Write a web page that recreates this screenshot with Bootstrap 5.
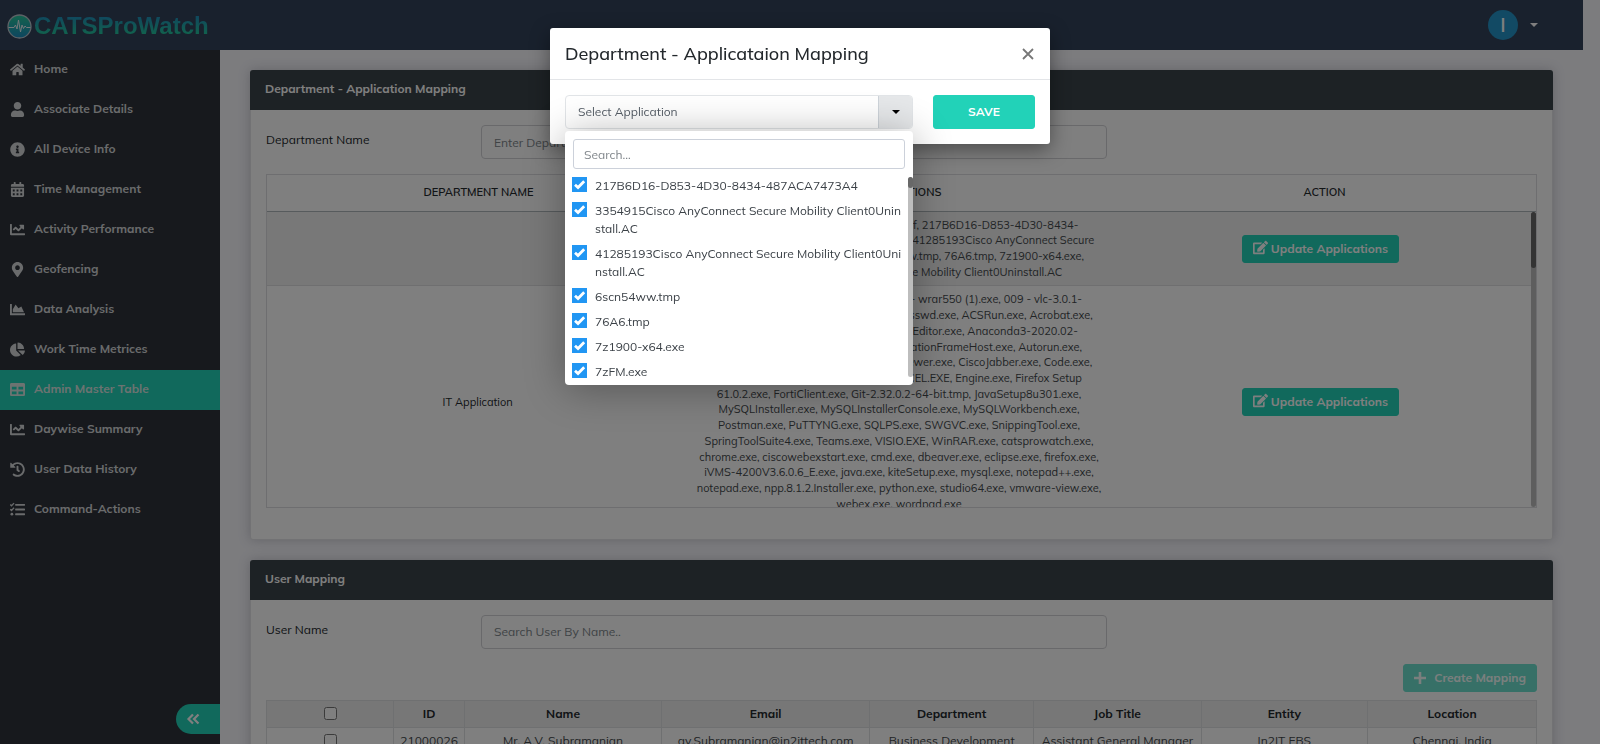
<!DOCTYPE html>
<html lang="en">
<head>
<meta charset="utf-8">
<meta name="viewport" content="width=device-width, initial-scale=1">
<title>CATSProWatch - Admin Master Table</title>
<link href="https://cdn.jsdelivr.net/npm/bootstrap@5.3.0/dist/css/bootstrap.min.css" rel="stylesheet">
<style>
  :root { --brand: #22d2b8; --bar: #32425a; --side: #2e333b; --head: #3b444a; }
  body { font-family: Mulish, Muli, Lato, sans-serif; font-size: 12px; line-height: 18px; color: #23282c; background: #f8f8fd; padding-right: 17px; overflow: hidden; }
  .fa-ico { width: 15px; height: 15px; fill: currentColor; flex: none; vertical-align: -2px; }
  .topbar { height: 50px; background: var(--bar); padding: 0 45px 0 7px; }
  .brand-name { font: bold 25px/30px "Liberation Sans", sans-serif; font-size: 24px; background: linear-gradient(#2092bb 20%, #24c59a 80%); -webkit-background-clip: text; background-clip: text; color: transparent; }
  .brand-link { gap: 2px; padding-top: 2px; }
  .avatar { width: 30px; height: 30px; background: #2494c8; font-size: 20px; font-weight: 600; }
  .user-toggle::after { margin-left: 12px; }
  .side { width: 220px; flex: none; height: calc(100vh - 50px); background: var(--side); }
  .side .nav-link { height: 40px; color: #d4d6d8; font-weight: 700; padding: 0 10px 2px; gap: 9px; }
  .side .nav-link.active { background: var(--brand); color: #d8e6e2; }
  .fold { width: 44px; height: 30px; background: var(--brand); color: #fff; border-radius: 15px 0 0 15px; margin-bottom: 10px; }
  .main-area { padding: 20px 30px; gap: 20px; min-width: 0; }
  .panel { border-color: #e4e5e8; border-radius: 3px; box-shadow: 0 0 12px rgba(60,60,75,.25); }
  .panel > .card-header { height: 40px; margin: -1px -1px 0; background: var(--head); color: #fff; font-weight: 700; border: 0; border-radius: 3px 3px 0 0; padding: 0 15px 2px; }
  .panel > .card-body { padding: 15px 15px 31px; }
  .field-row { display: grid; grid-template-columns: 215px minmax(0, 626fr) minmax(0, 430fr); }
  .field-row label { padding-top: 6px; }
  .form-control { font-size: 12px; line-height: 18px; height: 34px; border-radius: 4px; border-color: #d2d2d6; padding: 6px 12px; }
  .form-control::placeholder { color: #80868b; }
  .btn-brand { --bs-btn-color: #fff; --bs-btn-bg: var(--brand); --bs-btn-border-color: var(--brand); --bs-btn-hover-color: #fff; --bs-btn-hover-bg: #1dbda5; --bs-btn-disabled-bg: #6fe0ce; --bs-btn-disabled-color: #f6fffd; --bs-btn-disabled-border-color: #6fe0ce; --bs-btn-disabled-opacity: 1; font-size: 12px; line-height: 18px; font-weight: 700; border-radius: 3px; padding: 4px 10px; }
  .dept { border: 1px solid #dcdde0; margin-top: 15px; }
  .dept table { table-layout: fixed; text-align: center; margin: 0; width: 100%; }
  .dept th { height: 36px; font-size: 11px; font-weight: 600; border-bottom: 1px solid #aeb6ba; padding: 0 4px 1px; }
  .dept-scroll { height: 295px; overflow: hidden; }
  .dept-scroll td { padding: 6px 4px 5px; border-bottom: 1px solid #dedfe1; vertical-align: middle; font-size: 11px; }
  .dept-scroll td.apps { font-size: 11px; line-height: 1.43; white-space: nowrap; color: #43484c; }
  .dept-scroll tr:first-child td { background: #f0f0f0; }
  .bar-track { width: 5px; flex: none; border-radius: 3px; background: #bdbdbd; }
  .bar-thumb { width: 5px; border-radius: 3px; background: #686868; }
  .map-actions { margin-top: 15px; }
  .users { table-layout: fixed; text-align: center; margin: 8px 0 0; --bs-table-border-color: #dfe0e2; --bs-table-color: #23282c; }
  .users th { background: #efefef; font-weight: 700; }
  .users th, .users td { padding: 4px; height: 27px; white-space: nowrap; vertical-align: middle; }
  .users td { color: #43484c; }
  .users input { width: 13px; height: 13px; margin: 0; display: block; margin-inline: auto; }
  .modal-content { border: 0; border-radius: 3px; box-shadow: 0 6px 20px rgba(0,0,0,.4); }
  .modal-header { height: 52px; padding: 0 15px; border-color: #e3e5e8; }
  .modal-title { font-size: 18px; line-height: 24px; font-weight: 500; }
  .shut { border: 0; background: none; color: #777; padding: 0; width: 14px; height: 24px; }
  .modal-body { padding: 15px; gap: 20px; }
  .picker { width: 348px; flex: none; height: 34px; }
  .picker-btn { width: 100%; height: 34px; background: #fff; color: #555d66; border: 1px solid #e2e5e8; border-radius: 4px; font-size: 12px; padding: 0; overflow: hidden; }
  .picker-btn .arrow { width: 34px; height: 34px; background: #e6e8ea; border-left: 1px solid #ced4da; color: #000; }
  .picker-menu { position: absolute; top: 36px; left: 0; width: 100%; height: 254px; z-index: 5; background: #fff; border-radius: 4px; box-shadow: 0 4px 40px rgba(0,0,0,.32); padding: 8px 0; overflow: hidden; }
  .picker-menu .form-control { height: 30px; width: auto; margin: 0 8px 8px; padding: 5px 10px; border-color: #ccd1da; border-radius: 3px; flex: none; }
  .opts { height: 200px; gap: 7px; padding: 0 2px 0 7px; color: #3b4147; }
  .opts label { display: flex; gap: 8px; white-space: nowrap; }
  .opts input { appearance: none; width: 15px; height: 15px; margin: 0; flex: none; background: #2196f3 url("data:image/svg+xml,%3Csvg xmlns='http://www.w3.org/2000/svg' viewBox='0 0 15 15'%3E%3Cpath d='M3 7.800l3 2.700 6.200-6.300' fill='none' stroke='white' stroke-width='2.800'/%3E%3C/svg%3E") center/15px; }
</style>
</head>
<body>

<svg class="d-none" aria-hidden="true">
  <symbol id="i-home" viewBox="0 0 576 512"><path d="M280.37 148.26L96 300.11V464a16 16 0 0 0 16 16l112.06-.29a16 16 0 0 0 15.92-16V368a16 16 0 0 1 16-16h64a16 16 0 0 1 16 16v95.64a16 16 0 0 0 16 16.05L464 480a16 16 0 0 0 16-16V300L295.67 148.26a12.19 12.19 0 0 0-15.3 0zM571.6 251.47L488 182.56V44.05a12 12 0 0 0-12-12h-56a12 12 0 0 0-12 12v72.61L318.47 43a48 48 0 0 0-61 0L4.34 251.47a12 12 0 0 0-1.6 16.9l25.5 31A12 12 0 0 0 45.15 301l235.22-193.74a12.19 12.19 0 0 1 15.3 0L530.9 301a12 12 0 0 0 16.9-1.6l25.5-31a12 12 0 0 0-1.7-16.93z"/></symbol>
  <symbol id="i-user" viewBox="0 0 448 512"><path d="M224 256c70.7 0 128-57.3 128-128S294.7 0 224 0 96 57.3 96 128s57.3 128 128 128zm89.6 32h-16.7c-22.2 10.2-46.9 16-72.9 16s-50.6-5.8-72.9-16h-16.7C60.2 288 0 348.2 0 422.4V464c0 26.5 21.5 48 48 48h352c26.5 0 48-21.5 48-48v-41.6c0-74.2-60.2-134.4-134.4-134.4z"/></symbol>
  <symbol id="i-info" viewBox="0 0 512 512"><path d="M256 8C119.043 8 8 119.083 8 256c0 136.997 111.043 248 248 248s248-111.003 248-248C504 119.083 392.957 8 256 8zm0 110c23.196 0 42 18.804 42 42s-18.804 42-42 42-42-18.804-42-42 18.804-42 42-42zm56 254c0 6.627-5.373 12-12 12h-88c-6.627 0-12-5.373-12-12v-24c0-6.627 5.373-12 12-12h12v-64h-12c-6.627 0-12-5.373-12-12v-24c0-6.627 5.373-12 12-12h64c6.627 0 12 5.373 12 12v100h12c6.627 0 12 5.373 12 12v24z"/></symbol>
  <symbol id="i-cal" viewBox="0 0 448 512"><path fill-rule="evenodd" d="M0 464c0 26.5 21.5 48 48 48h352c26.5 0 48-21.5 48-48V192H0v272zM64 256h64v64H64zm128 0h64v64h-64zm128 0h64v64h-64zM64 384h64v64H64zm128 0h64v64h-64zm128 0h64v64h-64zM400 64h-48V16c0-8.8-7.2-16-16-16h-32c-8.8 0-16 7.2-16 16v48H160V16c0-8.8-7.2-16-16-16h-32c-8.8 0-16 7.2-16 16v48H48C21.5 64 0 85.5 0 112v48h448v-48c0-26.5-21.5-48-48-48z"/></symbol>
  <symbol id="i-line" viewBox="0 0 512 512"><path d="M496 384H64V80c0-8.84-7.16-16-16-16H16C7.16 64 0 71.16 0 80v336c0 17.67 14.33 32 32 32h464c8.84 0 16-7.16 16-16v-32c0-8.84-7.16-16-16-16zM464 96H345.94c-21.38 0-32.09 25.85-16.97 40.97l32.4 32.4L288 242.75l-73.37-73.37c-12.5-12.5-32.76-12.5-45.25 0l-68.69 68.69c-6.25 6.25-6.25 16.38 0 22.63l22.62 22.62c6.25 6.25 16.38 6.25 22.63 0L192 237.25l73.37 73.37c12.5 12.5 32.76 12.5 45.25 0l96-96 32.4 32.4c15.12 15.12 40.97 4.41 40.97-16.97V112c.01-8.84-7.15-16-15.99-16z"/></symbol>
  <symbol id="i-pin" viewBox="0 0 384 512"><path d="M172.268 501.67C26.97 291.031 0 269.413 0 192 0 85.961 85.961 0 192 0s192 85.961 192 192c0 77.413-26.97 99.031-172.268 309.67-9.535 13.774-29.93 13.773-39.464 0zM192 272c44.183 0 80-35.817 80-80s-35.817-80-80-80-80 35.817-80 80 35.817 80 80 80z"/></symbol>
  <symbol id="i-area" viewBox="0 0 512 512"><path d="M500 384c6.6 0 12 5.4 12 12v40c0 6.600-5.400 12-12 12H12c-6.600 0-12-5.400-12-12V76c0-6.600 5.400-12 12-12h40c6.600 0 12 5.400 12 12v308h436zM372.7 159.5L288 216l-85.300-113.700c-5.100-6.800-15.500-6.300-19.900 1L96 248v104h384l-89.900-187.800c-3.200-6.500-11.400-8.700-17.400-4.700z"/></symbol>
  <symbol id="i-pie" viewBox="0 0 544 512"><path d="M527.79 288H290.5l158.03 158.03c6.04 6.04 15.98 6.53 22.19.68 38.7-36.46 65.32-85.61 73.13-140.86 1.34-9.46-6.51-17.85-16.06-17.85zm-15.83-64.8C503.72 103.74 408.26 8.28 288.8.04 279.68-.59 272 7.1 272 16.24V240h223.77c9.14 0 16.82-7.68 16.19-16.8zM224 288V50.71c0-9.55-8.39-17.4-17.84-16.06C86.99 51.49-4.1 155.6.14 280.37 4.5 408.51 114.83 513.59 243.03 511.98c50.4-.63 96.97-16.87 135.26-44.03 7.9-5.6 8.42-17.23 1.57-24.08L224 288z"/></symbol>
  <symbol id="i-table" viewBox="0 0 512 512"><path d="M464 32H48C21.49 32 0 53.49 0 80v352c0 26.51 21.49 48 48 48h416c26.51 0 48-21.49 48-48V80c0-26.51-21.49-48-48-48zM224 416H64v-96h160v96zm0-160H64v-96h160v96zm224 160H288v-96h160v96zm0-160H288v-96h160v96z"/></symbol>
  <symbol id="i-hist" viewBox="0 0 512 512"><path d="M504 255.531c.253 136.64-111.18 248.372-247.82 248.468-59.015.042-113.223-20.53-155.822-54.911-11.077-8.94-11.905-25.541-1.839-35.607l11.267-11.267c8.609-8.609 22.353-9.551 31.891-1.984C173.062 425.135 212.781 440 256 440c101.705 0 184-82.311 184-184 0-101.705-82.311-184-184-184-48.814 0-93.149 18.969-126.068 49.932l50.754 50.754c10.08 10.08 2.941 27.314-11.313 27.314H24c-8.837 0-16-7.163-16-16V38.627c0-14.254 17.234-21.393 27.314-11.314l49.372 49.372C129.209 34.136 189.552 8 256 8c136.81 0 247.747 110.78 248 247.531zm-180.912 78.784l9.823-12.63c8.138-10.463 6.253-25.542-4.21-33.679L288 256.349V152c0-13.255-10.745-24-24-24h-16c-13.255 0-24 10.745-24 24v135.651l65.409 50.874c10.463 8.137 25.541 6.253 33.679-4.21z"/></symbol>
  <symbol id="i-tasks" viewBox="0 0 512 512"><path d="M192 64h304q16 0 16 16v32q0 16-16 16H192q-16 0-16-16V80q0-16 16-16zm0 160h304q16 0 16 16v32q0 16-16 16H192q-16 0-16-16v-32q0-16 16-16zm0 160h304q16 0 16 16v32q0 16-16 16H192q-16 0-16-16v-32q0-16 16-16z"/><circle cx="64" cy="416" r="48"/><path d="M10 88l42 42 86-92M10 248l42 42 86-92" fill="none" stroke="currentColor" stroke-width="44"/></symbol>
  <symbol id="i-edit" viewBox="0 0 576 512"><path d="M402.6 83.2l90.2 90.2c3.8 3.8 3.8 10 0 13.8L274.4 405.6l-92.8 10.3c-12.4 1.4-22.9-9.1-21.5-21.5l10.3-92.8L388.8 83.2c3.8-3.8 10-3.8 13.8 0zm162-22.900l-48.800-48.800c-15.200-15.200-39.900-15.200-55.200 0l-35.400 35.400c-3.800 3.800-3.800 10 0 13.800l90.200 90.200c3.800 3.800 10 3.800 13.800 0l35.400-35.400c15.200-15.300 15.200-40 0-55.200zM384 346.200V448H64V128h229.800c3.200 0 6.200-1.300 8.500-3.500l40-40c7.600-7.600 2.200-20.500-8.500-20.500H48C21.500 64 0 85.500 0 112v352c0 26.500 21.500 48 48 48h352c26.500 0 48-21.500 48-48V306.200c0-10.700-12.900-16-20.500-8.500l-40 40c-2.200 2.300-3.500 5.300-3.500 8.500z"/></symbol>
</svg>

<header class="topbar d-flex align-items-center justify-content-between">
  <a href="#" class="brand-link d-flex align-items-center text-decoration-none" aria-label="CATSProWatch">
    <svg width="25" height="25" viewBox="0 0 25 25" aria-hidden="true">
      <defs><linearGradient id="lg" x2="0" y2="1"><stop offset="0" stop-color="#27c79a"/><stop offset="1" stop-color="#1c8cc0"/></linearGradient></defs>
      <circle cx="12.500" cy="12.500" r="11.500" fill="url(#lg)" stroke="#b9c4cc" stroke-width="1.300"/>
      <path d="M1.500 13.500H7l1.500-2.500 1.500 4 1.500-9 2 12 1.500-7 1.500 3.500L18 12l1.500 1.500h4" fill="none" stroke="#e8f2f4" stroke-width="1"/>
    </svg>
    <span class="brand-name">CATSProWatch</span>
  </a>
  <button type="button" class="user-toggle dropdown-toggle btn p-0 border-0 d-flex align-items-center text-white" aria-label="Account">
    <span class="avatar rounded-circle d-flex align-items-center justify-content-center">I</span>
  </button>
</header>

<div class="d-flex">
  <aside class="side d-flex flex-column">
    <nav class="nav flex-column flex-nowrap">
      <a class="nav-link d-flex align-items-center" href="#"><svg class="fa-ico"><use href="#i-home"/></svg>Home</a>
      <a class="nav-link d-flex align-items-center" href="#"><svg class="fa-ico"><use href="#i-user"/></svg>Associate Details</a>
      <a class="nav-link d-flex align-items-center" href="#"><svg class="fa-ico"><use href="#i-info"/></svg>All Device Info</a>
      <a class="nav-link d-flex align-items-center" href="#"><svg class="fa-ico"><use href="#i-cal"/></svg>Time Management</a>
      <a class="nav-link d-flex align-items-center" href="#"><svg class="fa-ico"><use href="#i-line"/></svg>Activity Performance</a>
      <a class="nav-link d-flex align-items-center" href="#"><svg class="fa-ico"><use href="#i-pin"/></svg>Geofencing</a>
      <a class="nav-link d-flex align-items-center" href="#"><svg class="fa-ico"><use href="#i-area"/></svg>Data Analysis</a>
      <a class="nav-link d-flex align-items-center" href="#"><svg class="fa-ico"><use href="#i-pie"/></svg>Work Time Metrices</a>
      <a class="nav-link active d-flex align-items-center" href="#"><svg class="fa-ico"><use href="#i-table"/></svg>Admin Master Table</a>
      <a class="nav-link d-flex align-items-center" href="#"><svg class="fa-ico"><use href="#i-line"/></svg>Daywise Summary</a>
      <a class="nav-link d-flex align-items-center" href="#"><svg class="fa-ico"><use href="#i-hist"/></svg>User Data History</a>
      <a class="nav-link d-flex align-items-center" href="#"><svg class="fa-ico"><use href="#i-tasks"/></svg>Command-Actions</a>
    </nav>
    <button type="button" class="fold btn border-0 p-0 ps-2 mt-auto ms-auto d-flex align-items-center" aria-label="Collapse menu">
      <svg width="18" height="14" viewBox="0 0 18 14" fill="none" stroke="currentColor" stroke-width="2.200" aria-hidden="true"><path d="M9 2.500L4.500 7 9 11.500M14.500 2.500L10 7l4.500 4.500"/></svg>
    </button>
  </aside>

  <main class="main-area flex-fill d-flex flex-column">
    <section class="panel card">
      <div class="card-header d-flex align-items-center">Department - Application Mapping</div>
      <div class="card-body">
        <div class="field-row">
          <label for="dept">Department Name</label>
          <input id="dept" class="form-control" placeholder="Enter Department Name">
        </div>
        <div class="dept">
          <table>
            <thead><tr><th>DEPARTMENT NAME</th><th>APPLICATIONS</th><th>ACTION</th></tr></thead>
          </table>
          <div class="dept-scroll d-flex">
            <table class="align-self-start">
              <tbody>
                <tr>
                  <td></td>
                  <td class="apps">0007 - JFL Application Form - Copy.pdf, 217B6D16-D853-4D30-8434-<br>487ACA7473A4, 3354915Cisco.AC.tmp, 41285193Cisco AnyConnect Secure<br>Mobility Client0Uninstall.AC, 6scn54ww.tmp, 76A6.tmp, 7z1900-x64.exe,<br>7zFM.exe, Cisco AnyConnect Secure Mobility Client0Uninstall.AC</td>
                  <td><button type="button" class="btn btn-brand"><svg class="fa-ico"><use href="#i-edit"/></svg> Update Applications</button></td>
                </tr>
                <tr>
                  <td>IT Application</td>
                  <td class="apps">001 - putty.exe, 003 - setup1.exe, 008 - wrar550 (1).exe, 009 - vlc-3.0.1-<br>win64.exe, 7zFM.exe, ACCOUNTS.exe, Asswd.exe, ACSRun.exe, Acrobat.exe,<br>Adobe Reader.exe, Alarm.exe, Allway Editor.exe, Anaconda3-2020.02-<br>Windows-x86_64.exe, App.exe, ApplicationFrameHost.exe, Autorun.exe,<br>Calculator.exe, Cap.exe, ChatBox.exe, Viewer.exe, CiscoJabber.exe, Code.exe,<br>DBeaver.exe, DW.exe, Discord.exe, EXCEL.EXE, Engine.exe, Firefox Setup<br>61.0.2.exe, FortiClient.exe, Git-2.32.0.2-64-bit.tmp, JavaSetup8u301.exe,<br>MySQLInstaller.exe, MySQLInstallerConsole.exe, MySQLWorkbench.exe,<br>Postman.exe, PuTTYNG.exe, SQLPS.exe, SWGVC.exe, SnippingTool.exe,<br>SpringToolSuite4.exe, Teams.exe, VISIO.EXE, WinRAR.exe, catsprowatch.exe,<br>chrome.exe, ciscowebexstart.exe, cmd.exe, dbeaver.exe, eclipse.exe, firefox.exe,<br>iVMS-4200V3.6.0.6_E.exe, java.exe, kiteSetup.exe, mysql.exe, notepad++.exe,<br>notepad.exe, npp.8.1.2.Installer.exe, python.exe, studio64.exe, vmware-view.exe,<br>webex.exe, wordpad.exe</td>
                  <td><button type="button" class="btn btn-brand"><svg class="fa-ico"><use href="#i-edit"/></svg> Update Applications</button></td>
                </tr>
              </tbody>
            </table>
            <div class="bar-track"><div class="bar-thumb" style="height:19%"></div></div>
          </div>
        </div>
      </div>
    </section>

    <section class="panel card">
      <div class="card-header d-flex align-items-center">User Mapping</div>
      <div class="card-body">
        <div class="field-row">
          <label for="user">User Name</label>
          <input id="user" class="form-control" placeholder="Search User By Name..">
        </div>
        <div class="map-actions d-flex justify-content-end">
          <button type="button" class="btn btn-brand d-inline-flex align-items-center gap-2" disabled><svg width="12" height="12" viewBox="0 0 12 12" stroke="currentColor" stroke-width="2.600" aria-hidden="true"><path d="M6 0v12M0 6h12"/></svg>Create Mapping</button>
        </div>
        <table class="users table table-bordered">
          <colgroup><col style="width:10%"><col style="width:5.6%"><col style="width:15.500%"><col style="width:16.400%"><col style="width:12.900%"><col style="width:13.200%"><col style="width:13.100%"><col style="width:13.300%"></colgroup>
          <thead><tr><th><input type="checkbox" aria-label="Select all"></th><th>ID</th><th>Name</th><th>Email</th><th>Department</th><th>Job Title</th><th>Entity</th><th>Location</th></tr></thead>
          <tbody><tr><td><input type="checkbox" aria-label="Select row"></td><td>21000026</td><td>Mr. A.V. Subramanian</td><td>av.Subramanian@in2ittech.com</td><td>Business Development</td><td>Assistant General Manager</td><td>In2IT EBS</td><td>Chennai, India</td></tr></tbody>
        </table>
      </div>
    </section>
  </main>
</div>

<div class="modal-backdrop show"></div>
<div class="modal d-block" tabindex="-1" role="dialog" aria-labelledby="mtitle">
  <div class="modal-dialog">
    <div class="modal-content">
      <div class="modal-header">
        <h5 class="modal-title" id="mtitle">Department - Applicataion Mapping</h5>
        <button type="button" class="shut d-flex align-items-center justify-content-center" aria-label="Close"><svg width="12" height="12" viewBox="0 0 12 12" stroke="currentColor" stroke-width="1.800" aria-hidden="true"><path d="M1 1l10 10M11 1L1 11"/></svg></button>
      </div>
      <div class="modal-body d-flex">
        <div class="picker position-relative">
          <button type="button" class="picker-btn d-flex align-items-center justify-content-between"><span class="ps-2 ms-1">Select Application</span><span class="arrow d-flex align-items-center justify-content-center"><svg width="8" height="4" viewBox="0 0 8 4" aria-hidden="true"><path d="M0 0h8L4 4z"/></svg></span></button>
          <div class="picker-menu d-flex flex-column">
            <input class="form-control" placeholder="Search..." aria-label="Search applications">
            <div class="d-flex">
              <div class="opts flex-fill d-flex flex-column">
                <label><input type="checkbox" checked>217B6D16-D853-4D30-8434-487ACA7473A4</label>
                <label><input type="checkbox" checked><span>3354915Cisco AnyConnect Secure Mobility Client0Unin<br>stall.AC</span></label>
                <label><input type="checkbox" checked><span>41285193Cisco AnyConnect Secure Mobility Client0Uni<br>nstall.AC</span></label>
                <label><input type="checkbox" checked>6scn54ww.tmp</label>
                <label><input type="checkbox" checked>76A6.tmp</label>
                <label><input type="checkbox" checked>7z1900-x64.exe</label>
                <label><input type="checkbox" checked>7zFM.exe</label>
              </div>
              <div class="bar-track"><div class="bar-thumb" style="height:5.500%"></div></div>
            </div>
          </div>
        </div>
        <button type="button" class="btn btn-brand flex-fill">SAVE</button>
      </div>
    </div>
  </div>
</div>

<script src="https://cdn.jsdelivr.net/npm/bootstrap@5.3.0/dist/js/bootstrap.bundle.min.js"></script>
</body>
</html>
